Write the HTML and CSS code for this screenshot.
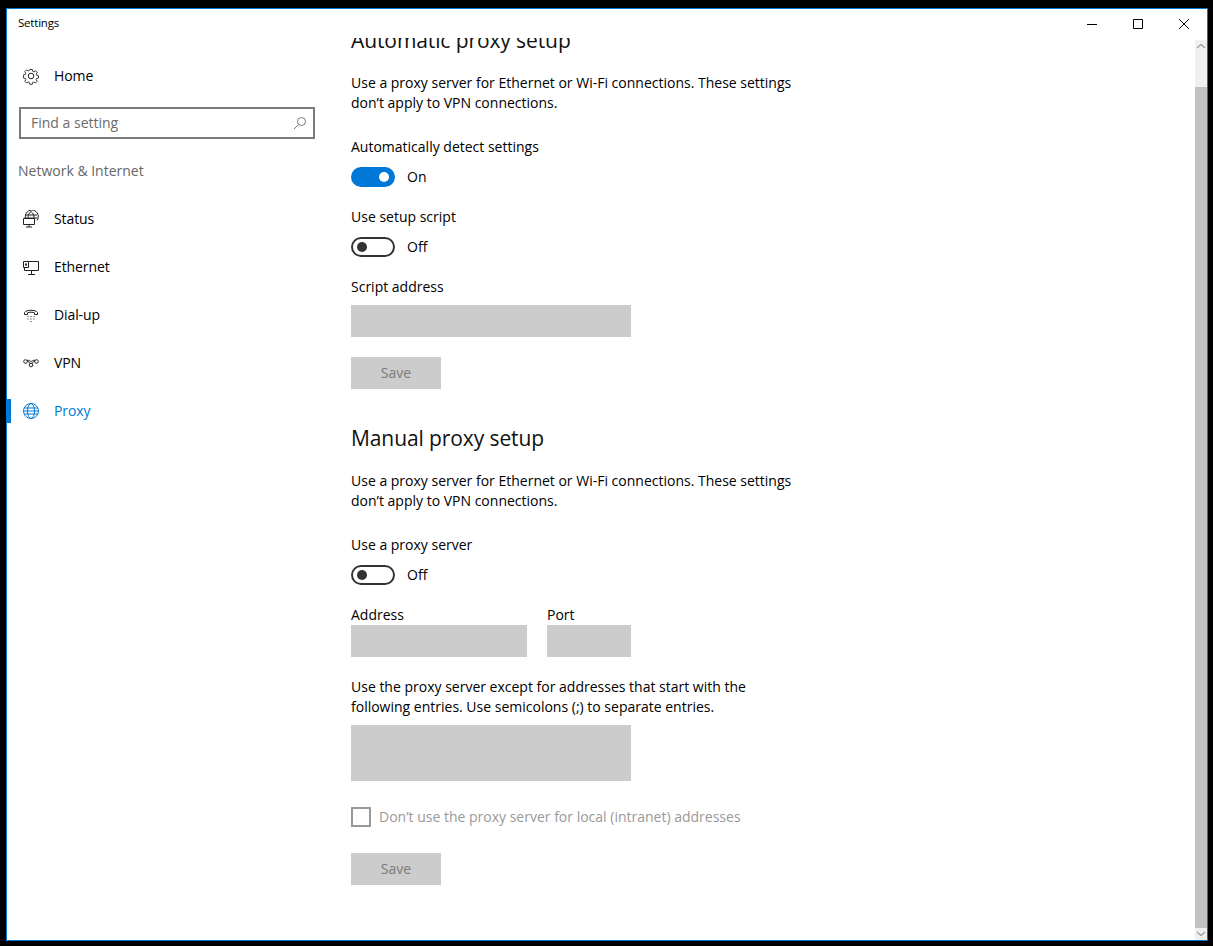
FILE: index.html
```html
<!DOCTYPE html>
<html lang="en">
<head>
<meta charset="utf-8">
<title>Settings</title>
<link rel="stylesheet" href="styles.css">
</head>
<body>
<div class="window">
  <header class="titlebar">
    <span class="title">Settings</span>
    <div class="controls">
      <span class="ctl"><svg width="12" height="12" viewBox="0 0 12 12"><path d="M1 6.5h10" stroke="#000" fill="none"/></svg></span>
      <span class="ctl"><svg width="12" height="12" viewBox="0 0 12 12"><path d="M1.5 1.5h9v9h-9z" stroke="#000" fill="none"/></svg></span>
      <span class="ctl"><svg width="12" height="12" viewBox="0 0 12 12"><path d="M1 1l10 10M11 1L1 11" stroke="#000" fill="none"/></svg></span>
    </div>
  </header>
  <div class="body">
    <nav class="sidebar">
      <div class="nav-item home">
        <svg class="ico" width="18" height="18" viewBox="0 0 18 18" fill="none" stroke="#222" stroke-width="1"><circle cx="9" cy="9" r="2.8"/><path d="M7.6 1.6h2.8l.4 2.1 1.4.6 1.8-1.2 2 2-1.2 1.8.6 1.4 2 .4v2.6l-2 .4-.6 1.4 1.2 1.8-2 2-1.8-1.2-1.4.6-.4 2H7.6l-.4-2-1.4-.6-1.8 1.2-2-2 1.2-1.8-.6-1.4-2-.4V7.7l2-.4.6-1.4L2 4.100l2-2 1.800 1.200 1.400-.6z" transform="translate(1 1) scale(.89)"/></svg>
        <span>Home</span>
      </div>
      <div class="search">
        <span>Find a setting</span>
        <svg width="14" height="14" viewBox="0 0 14 14" fill="none" stroke="#777"><circle cx="8.500" cy="5.500" r="4"/><path d="M5.500 8.500L1 13"/></svg>
      </div>
      <div class="group">Network &amp; Internet</div>
      <div class="nav-item">
        <svg class="ico" width="18" height="18" viewBox="0 0 18 18" fill="none" stroke="#222"><path d="M3.500 8A6.500 6.500 0 1 1 15 10.500M9 1.500c-2 1.500-3 3.500-3 6M9 1.500c2 1.500 3 3.500 3 6v3M3 5h12M2.500 8h13"/><path d="M1.500 8.500h11v6h-11zM7 14.500v2.500M4 17h6" fill="#fff"/></svg>
        <span>Status</span>
      </div>
      <div class="nav-item">
        <svg class="ico" width="18" height="18" viewBox="0 0 18 18" fill="none" stroke="#222"><path d="M6.500 3.500h10v9h-14V10M9.500 12.500V16M6 16.500h7"/><path d="M1.500 3.500h5v6h-5z"/><path d="M3 5.500h2v2H3z" fill="#222" stroke="none"/></svg>
        <span>Ethernet</span>
      </div>
      <div class="nav-item">
        <svg class="ico" width="18" height="18" viewBox="0 0 18 18" fill="none" stroke="#222"><path d="M2.500 8.500V6.500C4 3.500 14 3.500 15.500 6.500V8.500H12.500V6.800C11 6 7 6 5.500 6.800V8.500z"/><path d="M5.500 10.500h1M8.500 10.500h1M11.500 10.500h1M5.500 13h1M8.500 13h1M11.500 13h1M8.500 15.500h1" stroke-dasharray="1 0"/></svg>
        <span>Dial-up</span>
      </div>
      <div class="nav-item">
        <svg class="ico" width="18" height="18" viewBox="0 0 18 18" fill="none" stroke="#222"><circle cx="3.500" cy="7.500" r="1.800"/><circle cx="14.500" cy="7.500" r="1.800"/><circle cx="9" cy="11" r="1.800"/><path d="M5.300 7.500c1.500 0 2.500 1 2.700 2M12.700 7.500c-1.500 0-2.500 1-2.700 2M5 6.500c2-1 3 1 4 1s2-2 4-1"/></svg>
        <span>VPN</span>
      </div>
      <div class="nav-item active">
        <svg class="ico" width="18" height="18" viewBox="0 0 18 18" fill="none" stroke="#0078d7"><circle cx="9" cy="9" r="7.500"/><ellipse cx="9" cy="9" rx="3.500" ry="7.500"/><path d="M2.200 6h13.600M2.200 12h13.600M1.500 9h15"/></svg>
        <span>Proxy</span>
      </div>
    </nav>
    <main class="main">
      <div class="content">
        <h2>Automatic proxy setup</h2>
        <p class="para">Use a proxy server for Ethernet or Wi-Fi connections. These settings<br>don’t apply to VPN connections.</p>
        <div class="label m24">Automatically detect settings</div>
        <div class="toggle-row m10"><span class="toggle on"><i></i></span><span>On</span></div>
        <div class="label m20">Use setup script</div>
        <div class="toggle-row m10"><span class="toggle"><i></i></span><span>Off</span></div>
        <div class="label m20">Script address</div>
        <div class="input wide m8"></div>
        <div class="btn m20">Save</div>
        <h2 class="m33">Manual proxy setup</h2>
        <p class="para">Use a proxy server for Ethernet or Wi-Fi connections. These settings<br>don’t apply to VPN connections.</p>
        <div class="label m24">Use a proxy server</div>
        <div class="toggle-row m10"><span class="toggle"><i></i></span><span>Off</span></div>
        <div class="addr m20">
          <div><div class="label">Address</div><div class="input address"></div></div>
          <div><div class="label">Port</div><div class="input port"></div></div>
        </div>
        <p class="para m20">Use the proxy server except for addresses that start with the<br>following entries. Use semicolons (;) to separate entries.</p>
        <div class="input wide tall m8"></div>
        <div class="check m26"><span class="box"></span><span>Don’t use the proxy server for local (intranet) addresses</span></div>
        <div class="btn m26">Save</div>
      </div>
    </main>
    <aside class="scrollbar">
      <div class="arrow"><svg width="10" height="6" viewBox="0 0 10 6" fill="none" stroke="#a6a6a6" stroke-width="1.600"><path d="M1 5l4-3.500L9 5"/></svg></div>
      <div class="track"></div>
      <div class="thumb"></div>
      <div class="arrow"><svg width="10" height="6" viewBox="0 0 10 6" fill="none" stroke="#a6a6a6" stroke-width="1.600"><path d="M1 1l4 3.500L9 1"/></svg></div>
    </aside>
  </div>
</div>
</body>
</html>
```
FILE: styles.css
```css
* { box-sizing: border-box; }
html, body { margin: 0; height: 100%; }
body {
  background: #000;
  padding: 8px 5px 5px 6px;
  font-family: "Open Sans", "Noto Sans", "Liberation Sans", sans-serif;
  font-size: 14px;
  line-height: 20px;
  color: #000;
  overflow: hidden;
}
.window {
  height: 933px;
  border: 1px solid #0078d7;
  background: #fff;
  display: flex;
  flex-direction: column;
}
.titlebar {
  height: 29px;
  flex: none;
  display: flex;
  justify-content: space-between;
  align-items: center;
  padding-left: 11px;
}
.title { font-size: 11.500px; letter-spacing: -.2px; position: relative; top: -1px; }
.controls { display: flex; height: 29px; align-items: center; padding-top: 1px; }
.ctl { width: 46px; display: flex; justify-content: center; align-items: center; height: 29px; }
.body { flex: 1; display: flex; min-height: 0; }
.sidebar { width: 320px; flex: none; padding-top: 14px; }
.nav-item {
  height: 48px;
  display: flex;
  align-items: center;
  padding-left: 15px;
  gap: 14px;
  position: relative;
  font-size: 14px;
  letter-spacing: -.1px;
}
.nav-item.home { margin-bottom: 7px; height: 48px; }
.nav-item.active { color: #0078d7; }
.nav-item.active::before {
  content: "";
  position: absolute;
  left: 0;
  top: 12px;
  width: 4px;
  height: 24px;
  background: #0078d7;
}
.search {
  margin-left: 12px;
  width: 296px;
  height: 32px;
  border: 2px solid #7a7a7a;
  display: flex;
  align-items: center;
  justify-content: space-between;
  padding: 0 6px 0 10px;
  color: #6b6b6b;
}
.group {
  margin: 22px 0 0 11px;
  height: 20px;
  color: #666;
  margin-bottom: 14px;
}
.main { flex: 1; overflow: hidden; padding-left: 24px; min-width: 0; }
.content { margin-top: -14px; }
h2 {
  margin: 0;
  font-weight: 400;
  font-size: 21px;
  line-height: 32px;
  color: #111;
  letter-spacing: -.1px;
}
.para { margin: 17px 0 0; }
.para.m20 { margin-top: 20px; }
.m8 { margin-top: 8px; }
.m10 { margin-top: 10px; }
.m20 { margin-top: 20px; }
.m24 { margin-top: 24px; }
.m26 { margin-top: 26px; }
.m33 { margin-top: 33px; }
.toggle-row { display: flex; align-items: center; gap: 12px; height: 20px; }
.toggle {
  width: 44px;
  height: 20px;
  border: 2px solid #333;
  border-radius: 10px;
  display: flex;
  align-items: center;
  padding: 0 4px;
}
.toggle i { width: 10px; height: 10px; border-radius: 50%; background: #333; }
.toggle.on { background: #0078d7; border-color: #0078d7; justify-content: flex-end; }
.toggle.on i { background: #fff; }
.input { background: #ccc; height: 32px; }
.wide { width: 280px; }
.tall { height: 56px; }
.address { width: 176px; }
.port { width: 84px; }
.addr { display: flex; gap: 20px; }
.btn {
  width: 90px;
  height: 32px;
  background: #ccc;
  color: #7a7a7a;
  display: flex;
  align-items: center;
  justify-content: center;
}
.check { display: flex; align-items: center; gap: 8px; color: #999; height: 20px; }
.box { width: 20px; height: 20px; border: 2px solid #999; }
.scrollbar {
  width: 12px;
  flex: none;
  margin-top: 2px;
  background: #f0f0f0;
  display: flex;
  flex-direction: column;
}
.arrow { height: 12px; display: flex; align-items: center; justify-content: center; flex: none; }
.track { height: 35px; flex: none; }
.thumb { flex: 1; background: #c2c2c2; }
```
